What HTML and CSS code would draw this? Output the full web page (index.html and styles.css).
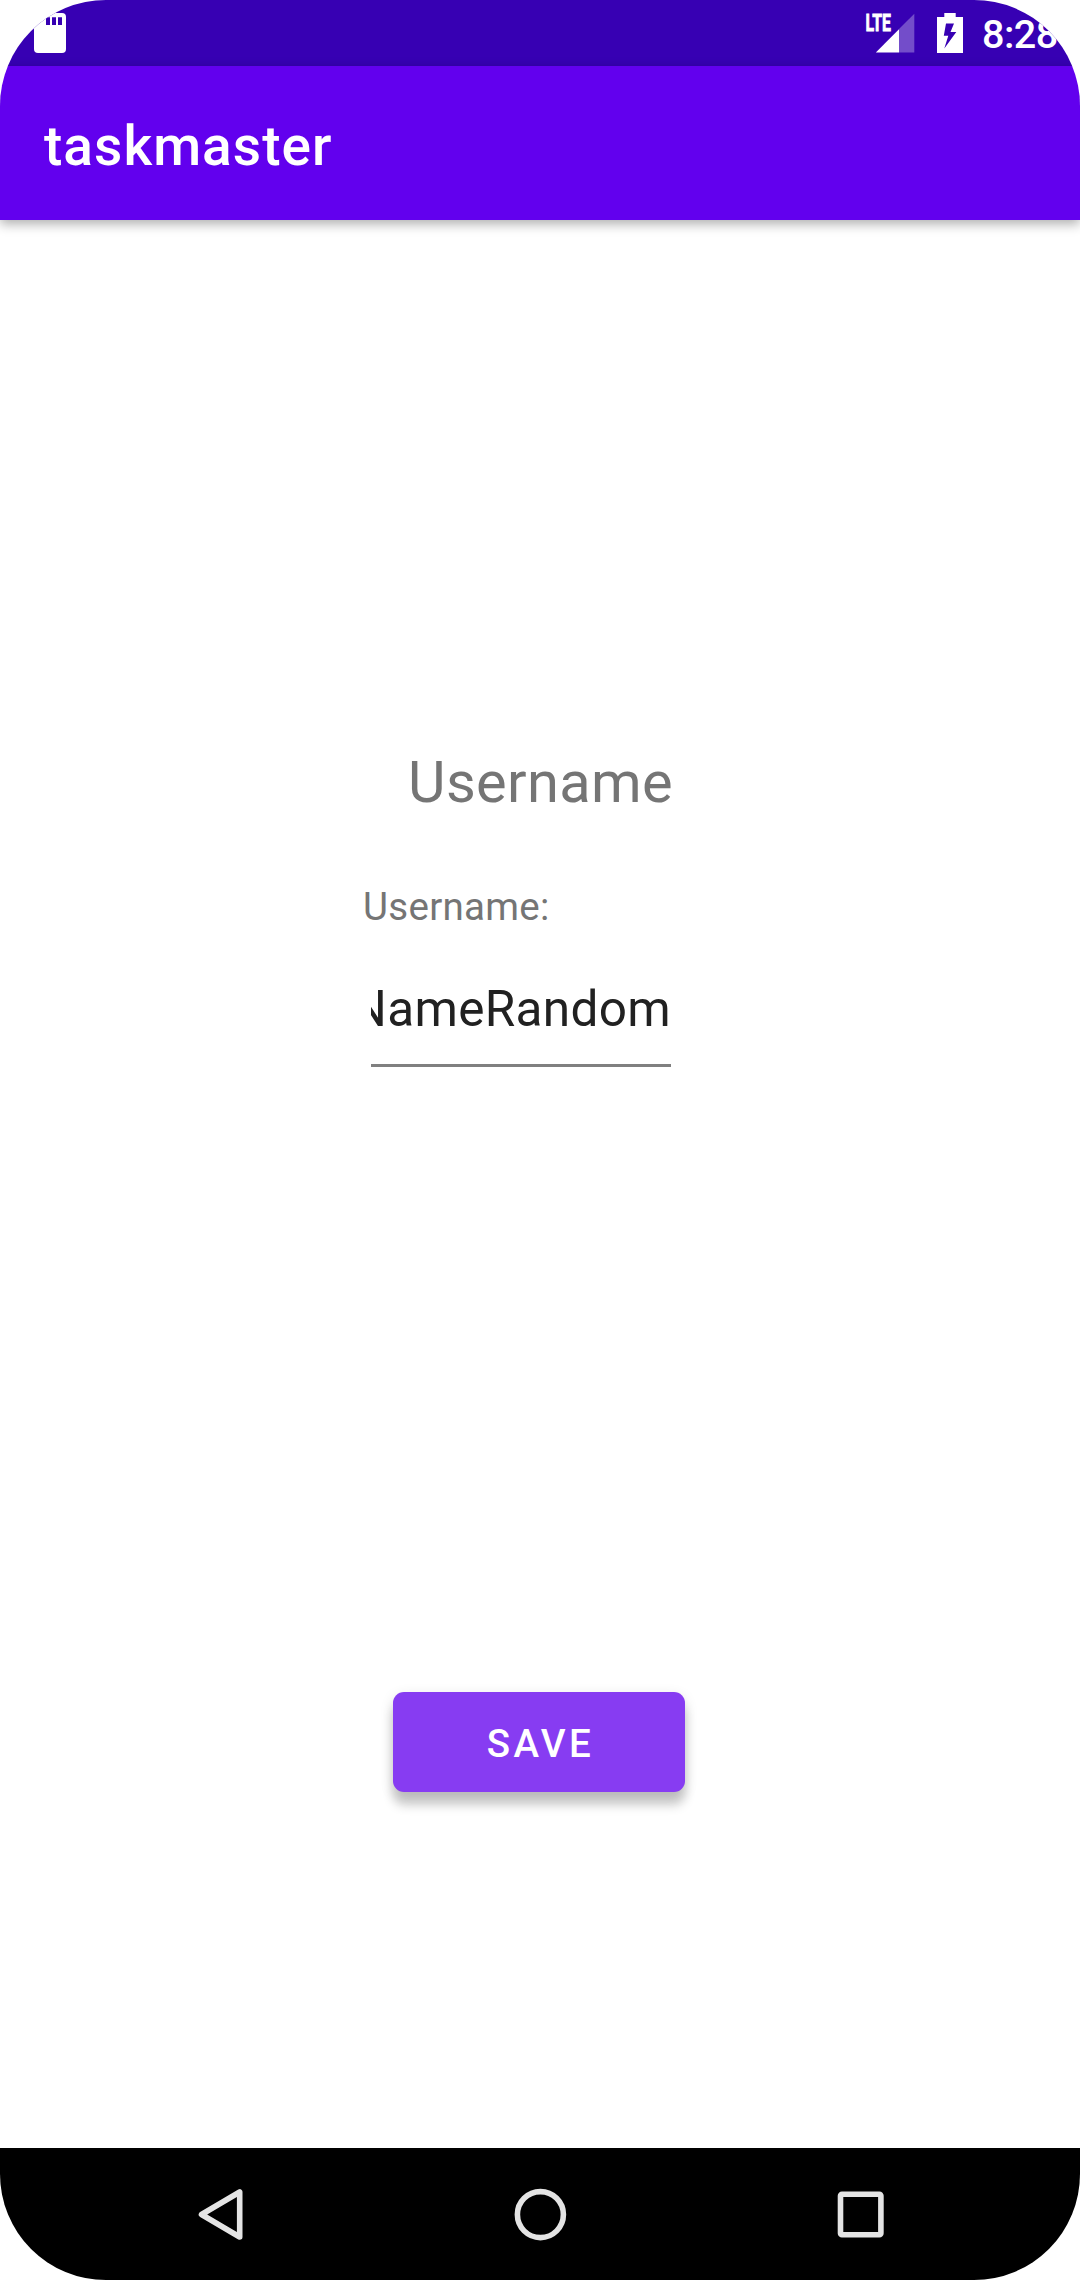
FILE: index.html
```html
<!DOCTYPE html>
<html lang="en">
<head>
<meta charset="utf-8">
<title>taskmaster</title>
<link rel="stylesheet" href="styles.css">
</head>
<body>
<div class="screen">
  <div class="status-bar">
    <svg class="icon-sd" width="32" height="40" viewBox="0 0 32 40">
      <path fill="#fff" d="M12 0h16q4 0 4 4v32q0 4-4 4H4q-4 0-4-4V12z"/>
      <path fill="#3700b3" d="M12 4.3h4v7.7h-4zM18 4.3h4v7.7h-4zM24 4.3h4v7.7h-4z"/>
    </svg>
    <svg class="icon-signal" width="50" height="40" viewBox="0 0 50 40">
      <path fill="#fff" fill-opacity=".3" d="M48.3 .8V39.5H33V16z"/>
      <path fill="#fff" d="M33 16.3V39.5H9.8z"/>
      <text class="network" x="-.5" y="18" textLength="25.5" lengthAdjust="spacingAndGlyphs">LTE</text>
    </svg>
    <svg class="icon-battery" width="26" height="40" viewBox="0 0 26 40">
      <path fill="#fff" fill-rule="evenodd" d="M7.3 0H18.7V4H26V40H0V4H7.3zM9 10.5L6.8 22.7H11.3L7.3 35.5L19.3 19H13.5L17 10.5z"/>
    </svg>
    <span class="clock">8:28</span>
  </div>
  <header class="app-bar"><h1 class="app-title">taskmaster</h1></header>
  <main class="content">
    <h2 class="heading">Username</h2>
    <div class="field">
      <label class="field-label">Username:</label>
      <div class="field-input"><span>NameRandom</span></div>
    </div>
    <button class="save" type="button">SAVE</button>
  </main>
  <nav class="nav-bar">
    <svg width="60" height="60" viewBox="0 0 60 60"><path d="M49.7 8V53L11.5 30.5z"/></svg>
    <svg width="60" height="60" viewBox="0 0 60 60"><circle cx="30.4" cy="30.6" r="23"/></svg>
    <svg width="60" height="60" viewBox="0 0 60 60"><rect x="10.5" y="10.3" width="40.4" height="40.4" rx="1.5"/></svg>
  </nav>
</div>
</body>
</html>
```
FILE: styles.css
```css
body {
  margin: 0;
  background: #fff;
  font-family: Roboto, "Liberation Sans", sans-serif;
}

.screen {
  display: flex;
  flex-direction: column;
  width: 1080px;
  height: 2280px;
  border-radius: 106px;
  overflow: hidden;
  background: #fff;
}

.status-bar {
  display: flex;
  align-items: center;
  box-sizing: border-box;
  height: 66px;
  padding: 0 0 0 34px;
  background: #3700b3;
  color: #fff;
}

.icon-signal {
  margin-left: auto;
  overflow: visible;
}

.network {
  font-size: 23px;
  font-weight: 700;
  fill: #fff;
  stroke: #fff;
  stroke-width: .8px;
}

.icon-battery {
  margin: 0 19px 0 21px;
}

.clock {
  width: 98px;
  font-size: 39.5px;
  font-weight: 500;
  line-height: 46px;
  padding-top: 4px;
  letter-spacing: -.5px;
}

.app-bar {
  display: flex;
  align-items: center;
  box-sizing: border-box;
  height: 154px;
  padding: 6px 44px 0;
  background: #6200ee;
  color: #fff;
  box-shadow: 0 4px 11px rgba(0, 0, 0, .32);
}

.app-title {
  margin: 0;
  font-size: 55px;
  font-weight: 500;
  letter-spacing: .019em;
}

.content {
  flex: 1;
  display: flex;
  flex-direction: column;
  align-items: center;
  color: #757575;
}

.heading {
  margin: 528px 0 68px;
  padding-left: 1px;
  font-size: 57.75px;
  font-weight: 400;
  line-height: 68px;
  letter-spacing: .35px;
}

.field {
  display: flex;
  flex-direction: column;
  width: 354px;
}

.field-label {
  font-size: 38.5px;
  line-height: 46px;
  letter-spacing: .3px;
}

.field-input {
  display: flex;
  justify-content: flex-end;
  width: 300px;
  height: 84px;
  margin: 50px 0 0 8px;
  overflow: hidden;
  border-bottom: 3px solid #808080;
  color: #212121;
  font-size: 49.5px;
  line-height: 58px;
  letter-spacing: .32px;
}

.save {
  width: 292px;
  height: 100px;
  margin: 624.5px 2px 0 0;
  padding: 4px 0 0 3px;
  border: 0;
  border-radius: 11px;
  background: #873cf2;
  box-shadow: 0 13px 11px rgba(0, 0, 0, .2), 0 4px 14px rgba(0, 0, 0, .12);
  color: #fff;
  font: 500 38.5px Roboto, sans-serif;
  letter-spacing: .0893em;
}

.nav-bar {
  display: flex;
  justify-content: center;
  align-items: center;
  gap: 260px;
  height: 132px;
  background: #000;
}

.nav-bar svg {
  fill: none;
  stroke: #e4e4e4;
  stroke-width: 5.6;
  stroke-linejoin: round;
}
```
